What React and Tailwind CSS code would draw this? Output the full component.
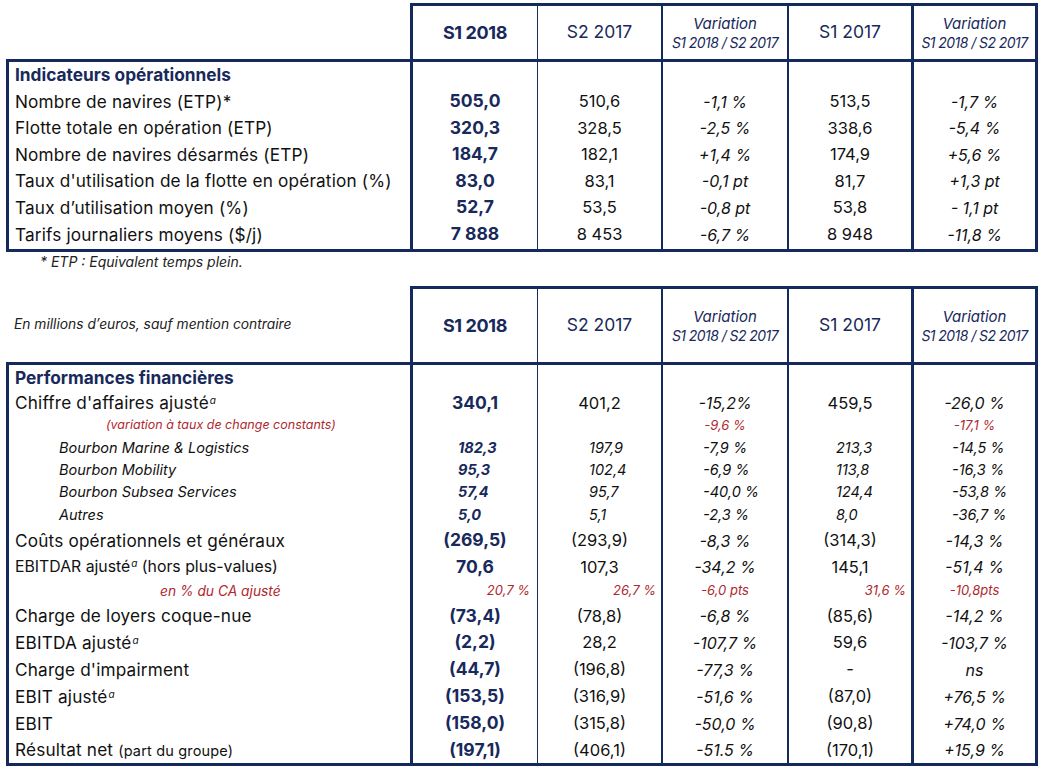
import React from "react";

const COLS = "grid grid-cols-[404px_127px_124px_126px_124px_127px]";
const B = "border-[#14295c]";
const cellBorders = [
  "border-l-[3px]",
  "border-l-[3px]",
  "border-l",
  "border-l-2",
  "border-l-2",
  "border-l-[3px] border-r-[3px]",
];
const NAVY = "text-[#18295b]";
const RED = "text-[#b0282e]";

function HeaderRow({ note, h }) {
  const Var = () => (
    <div className={`flex flex-col items-center italic leading-[19px] ${NAVY}`}>
      <span className="text-[15px]">Variation</span>
      <span className="text-[14px] tracking-[-0.04em]">S1 2018 / S2 2017</span>
    </div>
  );
  return (
    <div className={COLS} style={{ height: h }}>
      <div className="flex items-center pl-[8px] italic text-[13.8px] text-[#222]">{note}</div>
      <div className={`${cellBorders[1]} border-t-[3px] ${B} flex items-center justify-center font-bold text-[18px] ${NAVY} tracking-[-0.02em]`}>
        S1 2018
      </div>
      <div className={`${cellBorders[2]} border-t-[3px] ${B} flex items-center justify-center text-[17.5px] ${NAVY}`}>
        S2 2017
      </div>
      <div className={`${cellBorders[3]} border-t-[3px] ${B} flex items-center justify-center`}>
        <Var />
      </div>
      <div className={`${cellBorders[4]} border-t-[3px] ${B} flex items-center justify-center text-[17.5px] ${NAVY}`}>
        S1 2017
      </div>
      <div className={`${cellBorders[5]} border-t-[3px] ${B} flex items-center justify-center`}>
        <Var />
      </div>
    </div>
  );
}

function Row({ h, label, values = [], labelCls = "pl-[6px] text-[17.2px] tracking-[0.01em]", valueCls = [], rowCls = "" }) {
  return (
    <div className={`${COLS} ${rowCls}`} style={{ height: h }}>
      <div className={`${cellBorders[0]} ${B} flex items-center whitespace-nowrap ${labelCls}`}>{label}</div>
      {[0, 1, 2, 3, 4].map((i) => (
        <div
          key={i}
          className={`${cellBorders[i + 1]} ${B} flex items-center whitespace-nowrap ${
            valueCls[i] || "justify-center"
          }`}
        >
          {values[i]}
        </div>
      ))}
    </div>
  );
}

const Sup = () => <sup className="text-[10px] italic ml-[1px]">a</sup>;

const std = (a, b, c, d, e) => [
  <span className={`font-bold text-[17.5px] ${NAVY}`}>{a}</span>,
  <span className="text-[16.5px]">{b}</span>,
  <span className="italic text-[16px]">{c}</span>,
  <span className="text-[16.5px]">{d}</span>,
  <span className="italic text-[16px]">{e}</span>,
];

const sub = (a, b, c, d, e) => [
  <span className={`font-bold italic ${NAVY}`}>{a}</span>,
  <span className="italic">{b}</span>,
  <span className="italic">{c}</span>,
  <span className="italic">{d}</span>,
  <span className="italic">{e}</span>,
];
const subAlign = [
  "justify-start pl-[45px]",
  "justify-start pl-[51px]",
  "justify-start pl-[40px]",
  "justify-start pl-[47px]",
  "justify-start pl-[38px]",
];
const subLabel = "pl-[50px] italic text-[14.5px]";

export default function App() {
  const ops = [
    ["Nombre de navires (ETP)*", "505,0", "510,6", "-1,1 %", "513,5", "-1,7 %"],
    ["Flotte totale en opération (ETP)", "320,3", "328,5", "-2,5 %", "338,6", "-5,4 %"],
    ["Nombre de navires désarmés (ETP)", "184,7", "182,1", "+1,4 %", "174,9", "+5,6 %"],
    ["Taux d'utilisation de la flotte en opération (%)", "83,0", "83,1", "-0,1 pt", "81,7", "+1,3 pt"],
    ["Taux d’utilisation moyen (%)", "52,7", "53,5", "-0,8 pt", "53,8", "- 1,1 pt"],
    ["Tarifs journaliers moyens ($/j)", "7 888", "8 453", "-6,7 %", "8 948", "-11,8 %"],
  ];
  const opsH = [27, 26, 27, 26, 27, 27];

  return (
    <div
      className="w-[1049px] h-[773px] bg-white pt-[3px] pl-[6px] text-[#111] text-[16px]"
      style={{ fontFamily: "Inter, 'Noto Sans', sans-serif" }}
    >
      {/* Table 1 */}
      <HeaderRow h={56} note="" />
      <div className={`w-[1032px] border-t-[3px] border-b-[3px] ${B}`}>
        <Row
          h={26}
          labelCls="pl-[6px] pb-[6px] text-[17.3px]"
          label={<span className={`font-bold ${NAVY}`}>Indicateurs opérationnels</span>}
        />
        {ops.map((r, i) => (
          <Row key={i} h={opsH[i]} label={r[0]} values={std(r[1], r[2], r[3], r[4], r[5])} />
        ))}
        <Row h={1} />
      </div>
      <div className="h-[34px] flex items-start pl-[34px] italic text-[14px] leading-[20px] text-[#222]">
        * ETP : Equivalent temps plein.
      </div>

      {/* Table 2 */}
      <HeaderRow h={76} note="En millions d’euros, sauf mention contraire" />
      <div className={`w-[1032px] border-t-[3px] border-b-[3px] ${B}`}>
        <Row
          h={25}
          labelCls="pl-[6px] text-[17.3px]"
          label={<span className={`font-bold ${NAVY}`}>Performances financières</span>}
        />
        <Row
          h={24}
          label={
            <span>
              Chiffre d'affaires ajusté
              <Sup />
            </span>
          }
          values={std("340,1", "401,2", "-15,2%", "459,5", "-26,0 %")}
        />
        <Row
          h={23}
          rowCls={`${RED} italic text-[13px]`}
          labelCls="pl-[97px] text-[12.5px]"
          label="(variation à taux de change constants)"
          values={["", "", "-9,6 %", "", "-17,1 %"]}
        />
        <Row h={22} rowCls="text-[14.5px]" labelCls={subLabel} label="Bourbon Marine & Logistics" values={sub("182,3", "197,9", "-7,9 %", "213,3", "-14,5 %")} valueCls={subAlign} />
        <Row h={22} rowCls="text-[14.5px]" labelCls={subLabel} label="Bourbon Mobility" values={sub("95,3", "102,4", "-6,9 %", "113,8", "-16,3 %")} valueCls={subAlign} />
        <Row h={22} rowCls="text-[14.5px]" labelCls={subLabel} label="Bourbon Subsea Services" values={sub("57,4", "95,7", "-40,0 %", "124,4", "-53,8 %")} valueCls={subAlign} />
        <Row h={24} rowCls="text-[14.5px]" labelCls={subLabel} label="Autres" values={sub("5,0", "5,1", "-2,3 %", "8,0", "-36,7 %")} valueCls={subAlign} />
        <Row h={27} label="Coûts opérationnels et généraux" values={std("(269,5)", "(293,9)", "-8,3 %", "(314,3)", "-14,3 %")} />
        <Row
          h={25}
          labelCls="pl-[6px] text-[15.8px]"
          label={
            <span>
              EBITDAR ajusté
              <Sup /> (hors plus-values)
            </span>
          }
          values={std("70,6", "107,3", "-34,2 %", "145,1", "-51,4 %")}
        />
        <Row
          h={24}
          rowCls={`${RED} italic text-[13px]`}
          labelCls="pl-[151px] text-[13.8px]"
          label="en % du CA ajusté"
          values={["20,7 %", "26,7 %", "-6,0 pts", "31,6 %", "-10,8pts"]}
          valueCls={["justify-end pr-[7px]", "justify-end pr-[5px]", "justify-center", "justify-end pr-[5px]", "justify-center"]}
        />
        <Row h={26} label="Charge de loyers coque-nue" values={std("(73,4)", "(78,8)", "-6,8 %", "(85,6)", "-14,2 %")} />
        <Row
          h={27}
          label={
            <span>
              EBITDA ajusté
              <Sup />
            </span>
          }
          values={std("(2,2)", "28,2", "-107,7 %", "59,6", "-103,7 %")}
        />
        <Row h={27} label="Charge d'impairment" values={std("(44,7)", "(196,8)", "-77,3 %", "-", "ns")} />
        <Row
          h={27}
          label={
            <span>
              EBIT ajusté
              <Sup />
            </span>
          }
          values={std("(153,5)", "(316,9)", "-51,6 %", "(87,0)", "+76,5 %")}
        />
        <Row h={27} label="EBIT" values={std("(158,0)", "(315,8)", "-50,0 %", "(90,8)", "+74,0 %")} />
        <Row
          h={26}
          label={
            <span>
              Résultat net <span className="text-[14.5px]">(part du groupe)</span>
            </span>
          }
          values={std("(197,1)", "(406,1)", "-51.5 %", "(170,1)", "+15,9 %")}
        />
      </div>
    </div>
  );
}
